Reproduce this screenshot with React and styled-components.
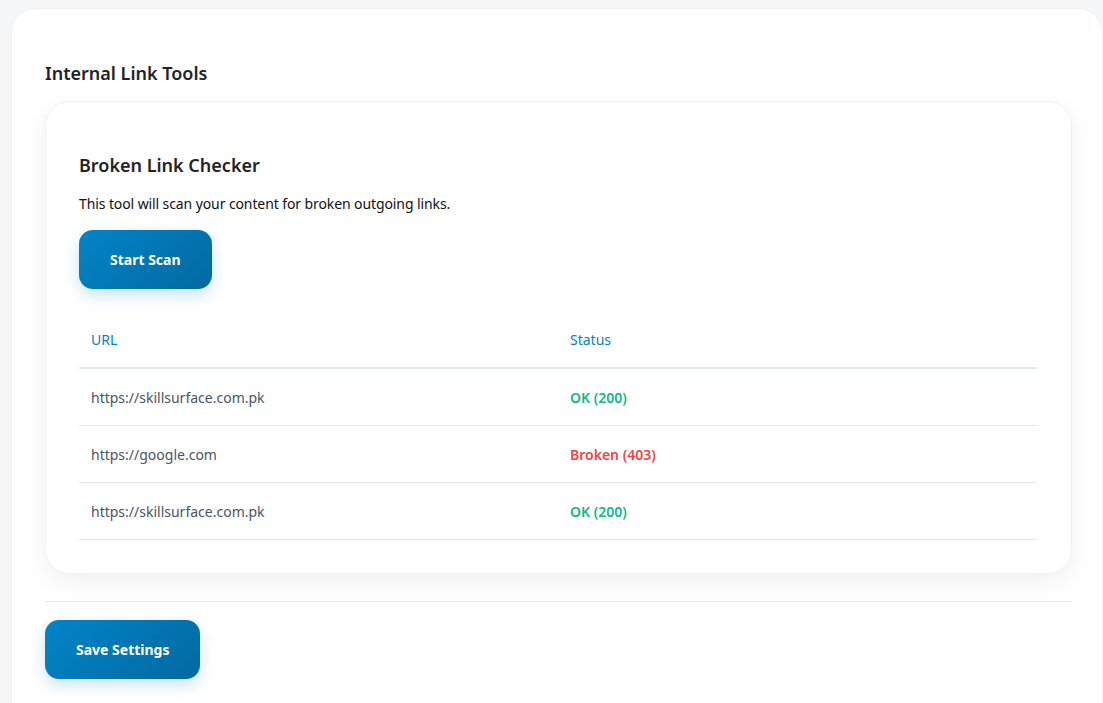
import React from 'react';
import styled, { createGlobalStyle } from 'styled-components';

const GlobalStyle = createGlobalStyle`
  html, body {
    margin: 0;
    padding: 0;
    background: #f6f7f9;
    font-family: "Noto Sans", "Open Sans", Arial, sans-serif;
    color: #1f2937;
  }
`;

const Page = styled.div`
  padding: 8px 0 0 11px;
  overflow: hidden;
  height: 703px;
  box-sizing: border-box;
`;

const Panel = styled.div`
  background: #ffffff;
  border: 1px solid #eef0f3;
  border-radius: 24px;
  padding: 50px 30px 24px 33px;
  min-height: 720px;
  box-sizing: border-box;
`;

const SectionTitle = styled.h2`
  margin: 0 0 14px;
  font-size: 18px;
  font-weight: 600;
  color: #1f2328;
  line-height: 28px;
`;

const Card = styled.div`
  background: #ffffff;
  border: 1px solid #f0f1f4;
  border-radius: 24px;
  box-shadow: 0 8px 24px rgba(0, 0, 0, 0.06);
  padding: 49px 34px 33px 33px;
`;

const CardTitle = styled.h3`
  margin: 0 0 14px;
  font-size: 18px;
  font-weight: 600;
  color: #1f2328;
  line-height: 28px;
`;

const Description = styled.p`
  margin: 0 0 15px;
  font-size: 14px;
  letter-spacing: -0.1px;
  color: #111;
  line-height: 22px;
`;

const PrimaryButton = styled.button`
  display: block;
  border: none;
  cursor: pointer;
  font-family: inherit;
  font-size: 14px;
  font-weight: 700;
  color: #ffffff;
  height: 59px;
  padding: 0 ${({ $wide }) => ($wide ? '31px' : '31px')};
  border-radius: 14px;
  background: linear-gradient(135deg, #0284c7 0%, #0369a1 100%);
  box-shadow: 0 6px 16px rgba(2, 132, 199, 0.22);
`;

const Table = styled.table`
  width: 100%;
  border-collapse: collapse;
  margin-top: 22px;
  font-size: 14px;
`;

const HeadCell = styled.th`
  text-align: left;
  font-weight: 400;
  color: #0284c7;
  padding: 0 12px;
  height: 56px;
  width: 50%;
  border-bottom: 2px solid #e2e8f0;
`;

const Row = styled.tr`
  border-bottom: 1px solid #e5e7eb;
`;

const Cell = styled.td`
  padding: 0 12px;
  height: 56px;
  color: ${({ $tone }) =>
    $tone === 'ok' ? '#10b981' : $tone === 'bad' ? '#ef4444' : '#4b5563'};
  font-weight: ${({ $tone }) => ($tone ? 600 : 400)};
`;

const Divider = styled.hr`
  border: none;
  border-top: 1px solid #e5e7eb;
  margin: 27px 0 18px;
`;

const rows = [
  { url: 'https://skillsurface.com.pk', status: 'OK (200)', tone: 'ok' },
  { url: 'https://google.com', status: 'Broken (403)', tone: 'bad' },
  { url: 'https://skillsurface.com.pk', status: 'OK (200)', tone: 'ok' },
];

export default function App() {
  return (
    <>
      <GlobalStyle />
      <Page>
        <Panel>
          <SectionTitle>Internal Link Tools</SectionTitle>
          <Card>
            <CardTitle>Broken Link Checker</CardTitle>
            <Description>This tool will scan your content for broken outgoing links.</Description>
            <PrimaryButton>Start Scan</PrimaryButton>
            <Table>
              <thead>
                <tr>
                  <HeadCell>URL</HeadCell>
                  <HeadCell>Status</HeadCell>
                </tr>
              </thead>
              <tbody>
                {rows.map((r, i) => (
                  <Row key={i}>
                    <Cell>{r.url}</Cell>
                    <Cell $tone={r.tone}>{r.status}</Cell>
                  </Row>
                ))}
              </tbody>
            </Table>
          </Card>
          <Divider />
          <PrimaryButton $wide>Save Settings</PrimaryButton>
        </Panel>
      </Page>
    </>
  );
}
